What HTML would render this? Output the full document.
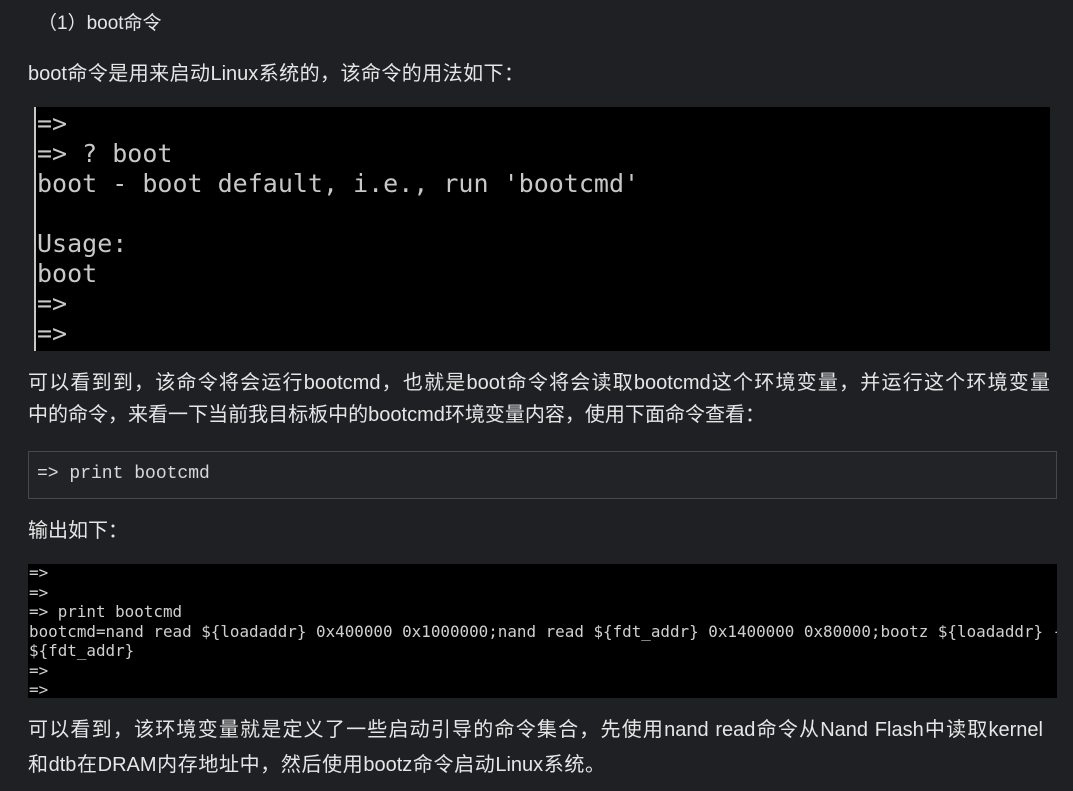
<!DOCTYPE html>
<html><head><meta charset="utf-8"><style>
body{margin:0;width:1073px;height:791px;background:#1f2023;overflow:hidden;position:relative;font-family:"Liberation Sans","Noto Sans CJK SC",sans-serif;color:#e6e6e6;}
.t{position:absolute;font-size:20px;white-space:nowrap;line-height:31px;}
.j{white-space:normal;text-align:justify;text-align-last:justify;}
.term1{position:absolute;left:34px;top:107px;width:1016px;height:244px;background:#000;border-left:2px solid #c8c8c8;box-sizing:border-box;}
.term1 pre{margin:0;position:absolute;left:1px;top:2px;font-family:"DejaVu Sans Mono",monospace;font-size:25px;line-height:30px;color:#c8c8c8;}
.code{position:absolute;left:28px;top:451px;width:1029px;height:48px;box-sizing:border-box;border:1px solid #46484c;background:#222326;}
.code pre{margin:0;position:absolute;left:8px;top:12px;font-family:"Liberation Mono",monospace;font-size:18px;color:#d8d8d8;}
.term2{position:absolute;left:28px;top:564px;width:1029px;height:134px;background:#000;overflow:hidden;}
.term2 pre{margin:0;position:absolute;left:1px;top:-1px;font-family:"DejaVu Sans Mono",monospace;font-size:15.9px;line-height:19.5px;color:#d0d0d0;}
</style></head><body>
<div class="t" style="left:38px;top:8px;font-size:19px">（1）boot命令</div>
<div class="t j" style="left:28px;top:59px;width:496px">boot命令是用来启动Linux系统的，该命令的用法如下：</div>
<div class="term1"><pre>=&gt;
=&gt; ? boot
boot - boot default, i.e., run 'bootcmd'

Usage:
boot
=&gt;
=&gt;</pre></div>
<div class="t j" style="left:28px;top:368px;width:1022px">可以看到到，该命令将会运行bootcmd，也就是boot命令将会读取bootcmd这个环境变量，并运行这个环境变量</div>
<div class="t j" style="left:28px;top:400px;width:737px">中的命令，来看一下当前我目标板中的bootcmd环境变量内容，使用下面命令查看：</div>
<div class="code"><pre>=&gt; print bootcmd</pre></div>
<div class="t" style="left:28px;top:516px">输出如下：</div>
<div class="term2"><pre>=&gt;
=&gt;
=&gt; print bootcmd
bootcmd=nand read ${loadaddr} 0x400000 0x1000000;nand read ${fdt_addr} 0x1400000 0x80000;bootz ${loadaddr} -
${fdt_addr}
=&gt;
=&gt;</pre></div>
<div class="t j" style="left:28px;top:715px;width:1015px">可以看到，该环境变量就是定义了一些启动引导的命令集合，先使用nand read命令从Nand Flash中读取kernel</div>
<div class="t j" style="left:28px;top:750px;width:577px">和dtb在DRAM内存地址中，然后使用bootz命令启动Linux系统。</div>
</body></html>
